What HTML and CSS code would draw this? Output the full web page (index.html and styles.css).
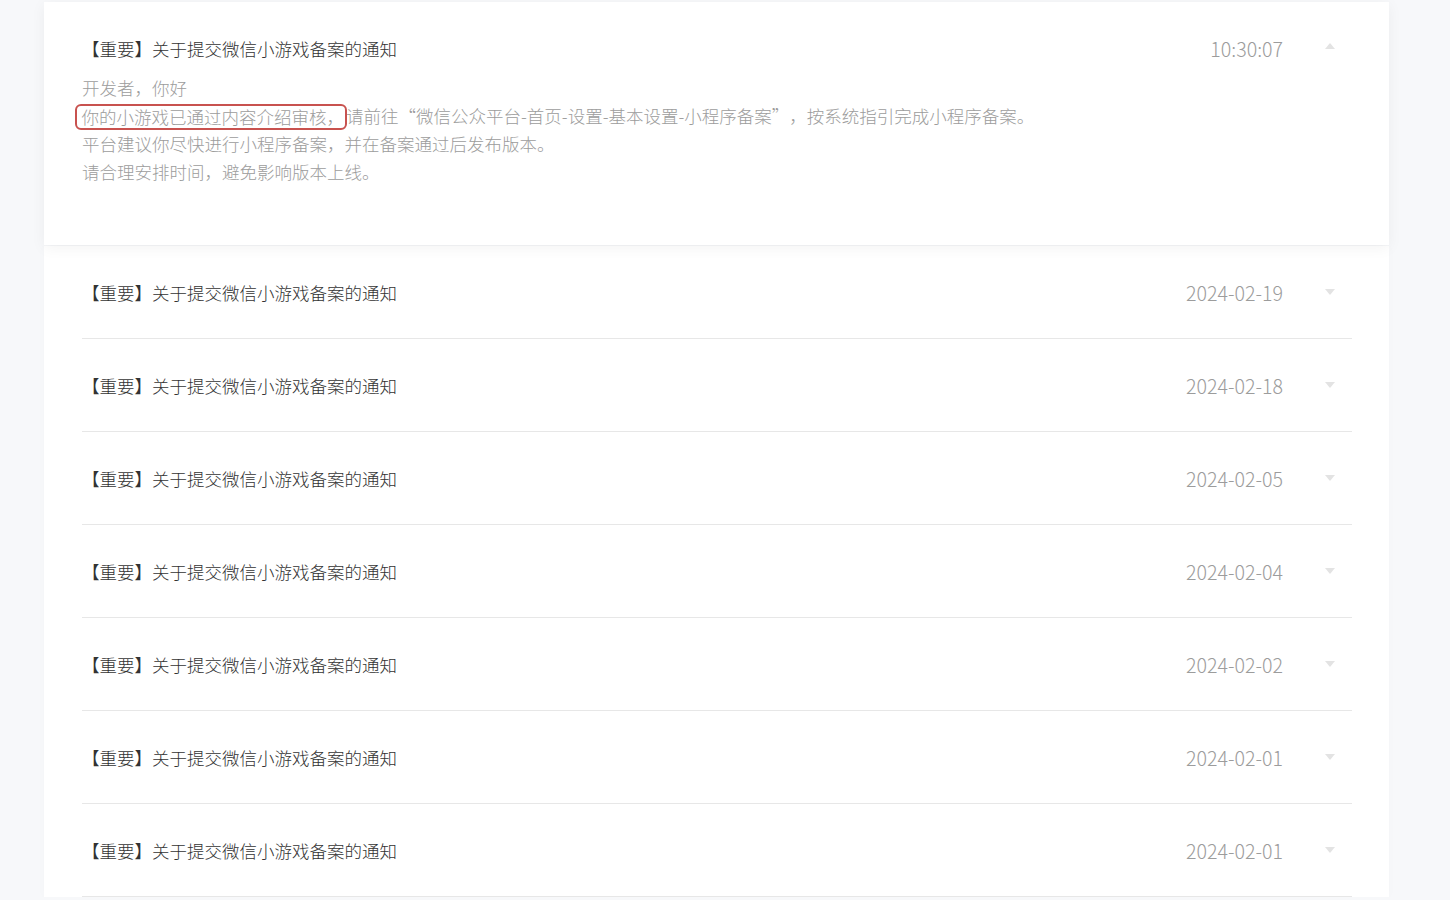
FILE: index.html
```html
<!DOCTYPE html>
<html lang="zh-CN">
<head>
    <meta charset="UTF-8">
    <title>通知</title>
    <link rel="stylesheet" href="styles.css">
</head>
<body>
<div class="page">
    <div class="notice open">
        <div class="head">
            <span class="title">【重要】关于提交微信小游戏备案的通知</span>
            <span class="date">10:30:07</span>
            <span class="arrow up"></span>
        </div>
        <div class="body">
            <p>开发者，你好</p>
            <p><span class="mark">你的小游戏已通过内容介绍审核，</span>请前往<span class="q open-q">“</span>微信公众平台-首页-设置-基本设置-小程序备案<span class="q">”</span>，按系统指引完成小程序备案。</p>
            <p>平台建议你尽快进行小程序备案，并在备案通过后发布版本。</p>
            <p>请合理安排时间，避免影响版本上线。</p>
        </div>
    </div>
    <div class="list">
        <div class="row">
            <span class="title">【重要】关于提交微信小游戏备案的通知</span>
            <span class="date">2024-02-19</span>
            <span class="arrow"></span>
        </div>
        <div class="row">
            <span class="title">【重要】关于提交微信小游戏备案的通知</span>
            <span class="date">2024-02-18</span>
            <span class="arrow"></span>
        </div>
        <div class="row">
            <span class="title">【重要】关于提交微信小游戏备案的通知</span>
            <span class="date">2024-02-05</span>
            <span class="arrow"></span>
        </div>
        <div class="row">
            <span class="title">【重要】关于提交微信小游戏备案的通知</span>
            <span class="date">2024-02-04</span>
            <span class="arrow"></span>
        </div>
        <div class="row">
            <span class="title">【重要】关于提交微信小游戏备案的通知</span>
            <span class="date">2024-02-02</span>
            <span class="arrow"></span>
        </div>
        <div class="row">
            <span class="title">【重要】关于提交微信小游戏备案的通知</span>
            <span class="date">2024-02-01</span>
            <span class="arrow"></span>
        </div>
        <div class="row">
            <span class="title">【重要】关于提交微信小游戏备案的通知</span>
            <span class="date">2024-02-01</span>
            <span class="arrow"></span>
        </div>
    </div>
</div>
</body>
</html>
```

FILE: styles.css
```css
*{padding:0;margin:0;box-sizing:border-box;}
body{background:#f7f8fa;font-family:"Noto Sans CJK SC","Microsoft YaHei",sans-serif;font-size:17.5px;font-weight:300;}
.page{padding:2px 61px 0 44px;}
.notice{background:#fff;padding:33px 37px 59px 38px;position:relative;z-index:1;box-shadow:0 3px 14px rgba(0,0,0,0.05);}
.head,.row{display:flex;align-items:center;line-height:28px;}
.title{flex:1;color:#333;}
.date{color:#9c9c9c;font-size:19.6px;}
.arrow{width:0;height:0;margin:0 17px 0 42px;border-left:5.5px solid transparent;border-right:5.5px solid transparent;border-top:6px solid #e3e3e3;}
.arrow.up{border-top:none;border-bottom:6px solid #e3e3e3;margin-top:-6px;}
.body{margin-top:11px;color:#9c9c9c;line-height:28px;}
.q{display:inline-block;width:1em;text-align:left;}
.q.open-q{text-align:right;}
.mark{display:inline-block;line-height:22px;border:2.5px solid #c8524f;border-radius:6px;padding:0 1px 0 4.5px;margin:0 -1px 0 -7px;position:relative;top:1px;}
.list{background:#fff;padding:0 37px 0 38px;margin-top:1px;box-shadow:0 0 10px rgba(0,0,0,0.02);}
.row{padding:33px 0 31px;border-bottom:1px solid #e7e7e7;}
.row .arrow{margin-top:-2px;}
```
